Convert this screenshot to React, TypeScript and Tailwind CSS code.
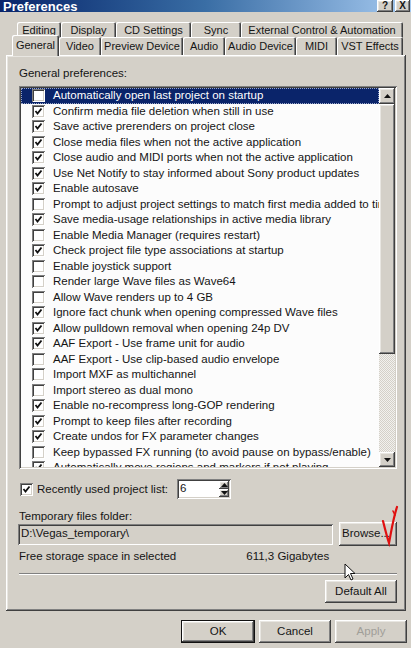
import { useState } from "react";

const raised =
  "shadow-[inset_-1px_-1px_#404040,inset_1px_1px_#ffffff,inset_-2px_-2px_#808080,inset_2px_2px_#e8e6e1]";
const sunken =
  "shadow-[inset_1px_1px_#808080,inset_-1px_-1px_#ffffff,inset_2px_2px_#404040,inset_-2px_-2px_#d4d0c8]";
const tabEdge = "shadow-[inset_1px_1px_#ffffff,inset_-1px_0_#404040,inset_-2px_0_#808080]";

const prefs: [string, boolean][] = [
  ["Automatically open last project on startup", false],
  ["Confirm media file deletion when still in use", true],
  ["Save active prerenders on project close", true],
  ["Close media files when not the active application", true],
  ["Close audio and MIDI ports when not the active application", true],
  ["Use Net Notify to stay informed about Sony product updates", true],
  ["Enable autosave", true],
  ["Prompt to adjust project settings to match first media added to timeline", false],
  ["Save media-usage relationships in active media library", true],
  ["Enable Media Manager (requires restart)", false],
  ["Check project file type associations at startup", true],
  ["Enable joystick support", false],
  ["Render large Wave files as Wave64", false],
  ["Allow Wave renders up to 4 GB", false],
  ["Ignore fact chunk when opening compressed Wave files", true],
  ["Allow pulldown removal when opening 24p DV", true],
  ["AAF Export - Use frame unit for audio", true],
  ["AAF Export - Use clip-based audio envelope", false],
  ["Import MXF as multichannel", false],
  ["Import stereo as dual mono", false],
  ["Enable no-recompress long-GOP rendering", true],
  ["Prompt to keep files after recording", true],
  ["Create undos for FX parameter changes", true],
  ["Keep bypassed FX running (to avoid pause on bypass/enable)", false],
  ["Automatically move regions and markers if not playing", true],
];

const backTabs = [
  ["Editing", "w-[44px]"],
  ["Display", "w-[55px]"],
  ["CD Settings", "w-[75px]"],
  ["Sync", "w-[50px]"],
  ["External Control & Automation", "w-[162px]"],
];

const frontTabs = [
  ["Video", "w-[42px]"],
  ["Preview Device", "w-[82px]"],
  ["Audio", "w-[42px]"],
  ["Audio Device", "w-[71px]"],
  ["MIDI", "w-[41px]"],
  ["VST Effects", "w-[66px]"],
];

function Check({ on }: { on: boolean }) {
  return (
    <span className={`w-[13px] h-[13px] shrink-0 bg-white flex items-center justify-center ${sunken}`}>
      {on && (
        <svg width="9" height="9" viewBox="0 0 9 9">
          <polyline points="1.5,4 3.5,6.5 7.5,1.5" fill="none" stroke="#111" strokeWidth="1.8" />
        </svg>
      )}
    </span>
  );
}

function Arrow({ up }: { up?: boolean }) {
  return (
    <svg width="7" height="4" viewBox="0 0 7 4">
      <polygon points={up ? "0,4 7,4 3.5,0" : "0,0 7,0 3.5,4"} fill="#111" />
    </svg>
  );
}

function Button({ label, cls, disabled }: { label: string; cls: string; disabled?: boolean }) {
  return (
    <div className={`${cls} h-[23px] flex items-center justify-center ${raised} ${disabled ? "text-[#a09e98]" : ""}`}>
      {label}
    </div>
  );
}

export default function App() {
  const [items] = useState(prefs);

  return (
    <div className="relative w-[411px] h-[648px] overflow-hidden bg-[#d4d0c8] text-[11.5px] text-[#151515] font-['Liberation_Sans',Arial,sans-serif]">
      {/* Title bar */}
      <div className="h-[12px] flex items-end bg-gradient-to-r from-[#0a246a] via-[#3a6ea5] to-[#a6caf0]">
        <span className="pl-[3px] text-white font-bold text-[13px] leading-[13px] mb-[-1px]">Preferences</span>
        <div className="ml-auto flex gap-[2px] pr-[1px]">
          <span className={`w-[16px] h-[12px] bg-[#d4d0c8] text-[10px] font-bold leading-[12px] text-center ${raised}`}>?</span>
          <span className={`w-[15px] h-[12px] bg-[#d4d0c8] text-[10px] font-bold leading-[12px] text-center ${raised}`}>X</span>
        </div>
      </div>

      {/* Tabs */}
      <div className="mt-[10px] pl-[17px] flex h-[15px] text-[11px]">
        {backTabs.map(([t, w]) => (
          <div key={t} className={`${w} h-[16px] flex items-center justify-center rounded-t-[2px] ${tabEdge}`}>
            {t}
          </div>
        ))}
      </div>
      <div className="pl-[12px] flex h-[18px] relative z-10 text-[11px]">
        <div className={`w-[47px] h-[21px] -mt-[2px] flex items-center justify-center bg-[#d4d0c8] rounded-t-[2px] ${tabEdge}`}>
          General
        </div>
        {frontTabs.map(([t, w]) => (
          <div key={t} className={`${w} h-[18px] flex items-center justify-center rounded-t-[2px] ${tabEdge}`}>
            {t}
          </div>
        ))}
      </div>

      {/* Panel */}
      <div className={`ml-[6px] w-[400px] h-[556px] pt-[12px] pl-[13px] pr-[9px] flex flex-col ${raised}`}>
        <div className="leading-[13px]">General preferences:</div>

        <div className={`mt-[6px] h-[383px] p-[2px] flex bg-[#fcfcfc] ${sunken}`}>
          <div className="flex-1 overflow-hidden">
            {items.map(([label, on], i) => (
              <div
                key={label}
                className={`h-[15.5px] flex items-center pl-[11px] gap-[8px] whitespace-nowrap ${
                  i === 0 ? "bg-[#0a246a] text-white outline-dotted outline-1 -outline-offset-1 outline-[#9aa6c8]" : ""
                }`}
              >
                <Check on={on} />
                <span>{label}</span>
              </div>
            ))}
          </div>
          {/* Scrollbar */}
          <div className="w-[16px] flex flex-col">
            <div className={`h-[16px] bg-[#d4d0c8] flex items-center justify-center ${raised}`}>
              <Arrow up />
            </div>
            <div className={`h-[250px] bg-[#d4d0c8] ${raised}`} />
            <div className="flex-1 bg-[repeating-conic-gradient(#d4d0c8_0_25%,#f2f1ee_0_50%)] bg-[length:2px_2px]" />
            <div className={`h-[15px] bg-[#d4d0c8] flex items-center justify-center ${raised}`}>
              <Arrow />
            </div>
          </div>
        </div>

        <div className="mt-[10px] h-[20px] flex items-center">
          <span className="ml-[1px]">
            <Check on />
          </span>
          <span className="ml-[4px] leading-[13px]">Recently used project list:</span>
          <div className={`ml-[9px] w-[54px] h-[20px] flex bg-white p-[2px] ${sunken}`}>
            <span className="flex-1 pl-[1px] leading-[15px]">6</span>
            <div className="w-[10px] flex flex-col">
              <div className={`flex-1 bg-[#d4d0c8] flex items-center justify-center ${raised}`}>
                <Arrow up />
              </div>
              <div className={`flex-1 bg-[#d4d0c8] flex items-center justify-center ${raised}`}>
                <Arrow />
              </div>
            </div>
          </div>
        </div>

        <div className="mt-[11px] leading-[12px]">Temporary files folder:</div>
        <div className="h-[24px] flex items-center gap-[6px]">
          <div className={`flex-1 h-[21px] -ml-[1px] pl-[3px] flex items-center bg-[#d4d0c8] ${sunken}`}>
            D:\Vegas_temporary\
          </div>
          <Button label="Browse..." cls="w-[58px] !h-[24px] pr-[4px]" />
        </div>

        <div className="mt-[4px] leading-[12px] flex">
          <span>Free storage space in selected</span>
          <span className="ml-[70px]">611,3 Gigabytes</span>
        </div>

        <div className="mt-[11px] h-[2px] border-t border-[#808080] border-b border-b-white" />

        <div className="mt-[5px] flex justify-end">
          <Button label="Default All" cls="w-[72px]" />
        </div>
      </div>

      {/* Dialog buttons */}
      <div className="mt-[9px] flex justify-end gap-[4px] pr-[4px]">
        <div className="w-[74px] h-[23px] border border-[#111] flex">
          <Button label="OK" cls="flex-1 !h-[21px]" />
        </div>
        <Button label="Cancel" cls="w-[72px]" />
        <Button label="Apply" cls="w-[72px]" disabled />
      </div>

      {/* Red pen mark over the Browse button */}
      <svg className="absolute left-[379px] top-[503px]" width="24" height="45" viewBox="0 0 24 45">
        <path d="M4 18 C6 26 8 34 10 40 C12 30 14 16 18 4" fill="none" stroke="#e01010" strokeWidth="2.2" strokeLinecap="round" />
        <path d="M14 8 L16 12" fill="none" stroke="#e01010" strokeWidth="1.6" strokeLinecap="round" />
      </svg>

      {/* Mouse cursor */}
      <svg className="absolute left-[344px] top-[563px]" width="14" height="20" viewBox="0 0 14 20">
        <path d="M1 1 L1 15 L4.5 11.5 L7 17 L9 16 L6.5 10.5 L11 10.5 Z" fill="#fff" stroke="#111" strokeWidth="1" />
      </svg>
    </div>
  );
}
